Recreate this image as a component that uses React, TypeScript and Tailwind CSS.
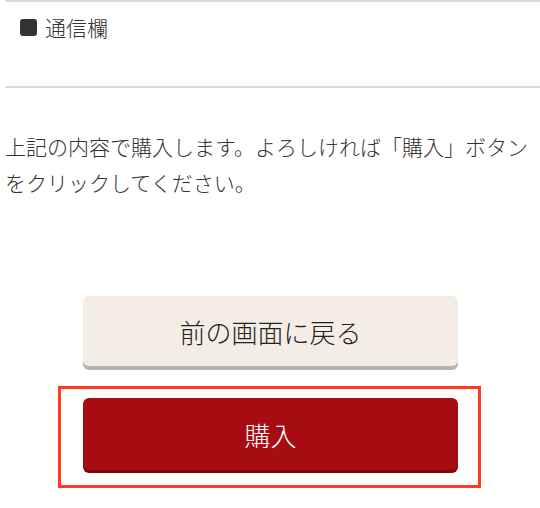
import React from "react";

export default function App() {
  const font = { fontFamily: '"Noto Sans CJK JP", "Noto Sans", sans-serif' };
  return (
    <div className="w-[540px] h-[508px] bg-white text-[#333333] overflow-hidden font-light" style={font}>
      <div className="ml-[5px] h-[88px] border-t-2 border-b-2 border-[#dcdcdc] flex items-start pt-[13px]">
        <div className="flex items-center">
          <span className="ml-[15px] w-[17px] h-[17px] rounded-[3px] bg-[#333333]" />
          <span className="ml-[8px] text-[21px] leading-[24px] text-[#333333]">通信欄</span>
        </div>
      </div>
      <p className="mt-[40px] pl-[5px] pr-0 text-[21px] leading-[36px] text-[#333333]">
        上記の内容で購入します。よろしければ「購入」ボタンをクリックしてください。
      </p>
      <div className="mt-[96px] ml-[83px] w-[375px] h-[70px] rounded-[6px] bg-[#f4ede6] shadow-[0_4px_0_#b8b4ae] flex items-center justify-center text-[26px] text-[#222222]">
        前の画面に戻る
      </div>
      <div className="mt-[20px] ml-[58px] w-[423px] h-[102px] border-[3px] border-[#ff3a1e] pl-[22px] pt-[9px]">
        <div className="w-[375px] h-[72px] rounded-[6px] bg-[#a60c12] shadow-[0_3px_0_#7a0a0e] flex items-center justify-center text-[26px] text-white">
          購入
        </div>
      </div>
    </div>
  );
}
